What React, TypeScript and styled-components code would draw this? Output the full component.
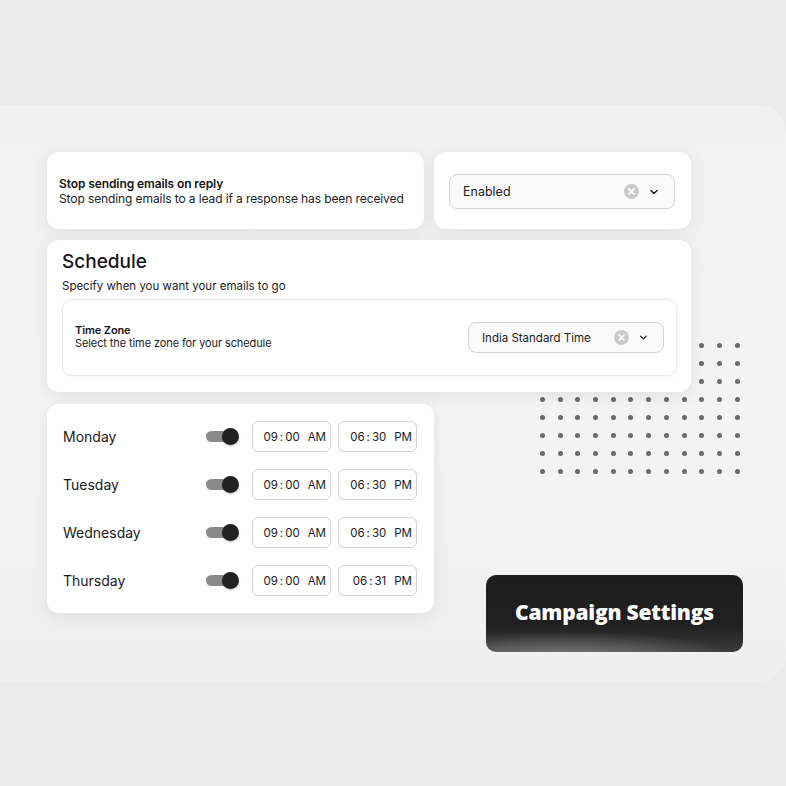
import React from 'react';
import styled, { createGlobalStyle } from 'styled-components';
import { ChevronDown } from 'lucide-react';

const GlobalStyle = createGlobalStyle`
    body {
        margin: 0;
        padding: 0;
        font-family: 'Inter', 'Liberation Sans', sans-serif;
        background-color: #ebebeb;
        color: #161616;
    }
`;

const Page = styled.div`
    width: 786px;
    height: 786px;
    padding-top: 105px;
    box-sizing: border-box;
    overflow: hidden;
`;

const Panel = styled.div`
    position: relative;
    height: 577px;
    box-sizing: border-box;
    padding: 47px 0 0 47px;
    background: linear-gradient(180deg, #f1f1f1 0%, #f4f4f4 60%, #efefef 100%);
    border-radius: 0 28px 28px 0;
    display: flex;
    flex-direction: column;
`;

const Dots = styled.div`
    position: absolute;
    left: 540px;
    top: 238px;
    display: grid;
    grid-template-columns: repeat(12, 5px);
    grid-auto-rows: 5px;
    column-gap: 12.7px;
    row-gap: 13px;
`;

const Dot = styled.span`
    width: 5px;
    height: 5px;
    border-radius: 50%;
    background: #6a6a6a;
`;

const Card = styled.div<{ $w: number }>`
    position: relative;
    z-index: 1;
    width: ${p => p.$w}px;
    box-sizing: border-box;
    background: #fff;
    border-radius: 12px;
    box-shadow: 0 4px 18px rgba(0, 0, 0, 0.08);
`;

const TopRow = styled.div`
    display: flex;
    gap: 10px;
`;

const ReplyCard = styled(Card)`
    height: 77px;
    padding: 2px 12px 0;
    display: flex;
    flex-direction: column;
    justify-content: center;
    white-space: nowrap;
`;

const SelectCard = styled(Card)`
    height: 77px;
    padding: 2px 16px 0 15px;
    display: flex;
    align-items: center;
`;

const Label = styled.div<{ $size: number }>`
    font-size: ${p => p.$size}px;
    font-weight: 600;
    line-height: 1.2;
    letter-spacing: -0.1px;
`;

const Hint = styled.div<{ $size: number }>`
    font-size: ${p => p.$size}px;
    line-height: 1.25;
    color: #222;
    letter-spacing: -0.1px;
`;

const Select = styled.div<{ $h: number; $size: number }>`
    flex: 1;
    height: ${p => p.$h}px;
    box-sizing: border-box;
    border: 1.5px solid #d3d3d3;
    border-radius: 8px;
    background: #fafafa;
    display: flex;
    align-items: center;
    padding: 0 14px 0 13px;
    font-size: ${p => p.$size}px;
    color: #222;
`;

const SelectValue = styled.span`
    flex: 1;
`;

const Clear = styled.svg`
    width: 15px;
    height: 15px;
    margin-right: 9px;
`;

const ScheduleCard = styled(Card)`
    margin-top: 11px;
    height: 152px;
    padding: 10px 14px 15px 15px;
`;

const Heading = styled.div`
    font-size: 19px;
    font-weight: 500;
    line-height: 24px;
`;

const SubHeading = styled.div`
    font-size: 11.5px;
    color: #222;
    margin-top: 5px;
`;

const ZoneBox = styled.div`
    margin-top: 6px;
    height: 77px;
    box-sizing: border-box;
    border: 1px solid #e9e9e9;
    border-radius: 10px;
    box-shadow: 0 2px 6px rgba(0, 0, 0, 0.04);
    display: flex;
    align-items: center;
    padding: 0 12px 0 12px;
`;

const ZoneText = styled.div`
    flex: 1;
`;

const ZoneSelect = styled(Select)`
    flex: 0 0 196px;
`;

const BottomRow = styled.div`
    display: flex;
    align-items: flex-start;
    margin-top: 12px;
`;

const DaysCard = styled(Card)`
    height: 209px;
    padding: 17px 17px 0 16px;
    display: flex;
    flex-direction: column;
    gap: 17px;
`;

const DayRow = styled.div`
    display: flex;
    align-items: center;
    height: 31px;
`;

const DayName = styled.div`
    flex: 1;
    font-size: 14px;
    color: #1a1a1a;
`;

const Toggle = styled.div`
    position: relative;
    width: 33px;
    height: 17px;
    margin-right: 13px;
`;

const Track = styled.span`
    position: absolute;
    left: 0;
    top: 3px;
    width: 26px;
    height: 11px;
    border-radius: 6px;
    background: #8a8a8a;
`;

const Knob = styled.span`
    position: absolute;
    right: 0;
    top: 0;
    width: 17px;
    height: 17px;
    border-radius: 50%;
    background: #222;
    box-shadow: 0 1px 2px rgba(0, 0, 0, 0.3);
`;

const TimeBox = styled.div`
    width: 79px;
    height: 31px;
    box-sizing: border-box;
    border: 1.5px solid #d4d4d4;
    border-radius: 6px;
    display: flex;
    align-items: center;
    justify-content: flex-end;
    padding-right: 4px;
    font-size: 11.5px;
    color: #1a1a1a;
    & + & {
        margin-left: 7px;
    }
`;

const Colon = styled.span`
    margin: 0 2px;
`;

const Meridiem = styled.span`
    margin-left: 8px;
`;

const Badge = styled.div`
    position: relative;
    z-index: 1;
    margin: 171px 0 0 52px;
    width: 257px;
    height: 77px;
    border-radius: 10px;
    background:
        radial-gradient(ellipse 70% 35% at 30% 108%, rgba(150, 150, 150, 0.75), rgba(150, 150, 150, 0) 100%),
        linear-gradient(180deg, #1d1d1d 0%, #202020 65%, #3a3a3a 100%);
    display: flex;
    align-items: center;
    justify-content: center;
    padding-bottom: 4px;
    box-sizing: border-box;
    color: #fff;
    font-family: 'Open Sans', 'DejaVu Sans', sans-serif;
    font-weight: 800;
    font-size: 21px;
    letter-spacing: -0.2px;
`;

const ClearIcon = () => (
    <Clear viewBox="0 0 16 16">
        <circle cx="8" cy="8" r="8" fill="#c9c9c9" />
        <path d="M5.3 5.3 L10.7 10.7 M10.7 5.3 L5.3 10.7" stroke="#fff" strokeWidth="1.8" strokeLinecap="round" />
    </Clear>
);

const Time = ({ h, m, p }: { h: string; m: string; p: string }) => (
    <TimeBox>
        {h}<Colon>:</Colon>{m}<Meridiem>{p}</Meridiem>
    </TimeBox>
);

const days = [
    { name: 'Monday', end: '30' },
    { name: 'Tuesday', end: '30' },
    { name: 'Wednesday', end: '30' },
    { name: 'Thursday', end: '31' },
];

const App: React.FC = () => {
    return (
        <>
            <GlobalStyle />
            <Page>
                <Panel>
                    <Dots>
                        {Array.from({ length: 96 }).map((_, i) => <Dot key={i} />)}
                    </Dots>

                    <TopRow>
                        <ReplyCard $w={377}>
                            <Label $size={12}>Stop sending emails on reply</Label>
                            <Hint $size={12}>Stop sending emails to a lead if a response has been received</Hint>
                        </ReplyCard>
                        <SelectCard $w={257}>
                            <Select $h={35} $size={12.5}>
                                <SelectValue>Enabled</SelectValue>
                                <ClearIcon />
                                <ChevronDown size={12} strokeWidth={3} color="#222" />
                            </Select>
                        </SelectCard>
                    </TopRow>

                    <ScheduleCard $w={644}>
                        <Heading>Schedule</Heading>
                        <SubHeading>Specify when you want your emails to go</SubHeading>
                        <ZoneBox>
                            <ZoneText>
                                <Label $size={11}>Time Zone</Label>
                                <Hint $size={11}>Select the time zone for your schedule</Hint>
                            </ZoneText>
                            <ZoneSelect $h={31} $size={11.5}>
                                <SelectValue>India Standard Time</SelectValue>
                                <ClearIcon />
                                <ChevronDown size={11} strokeWidth={3} color="#222" />
                            </ZoneSelect>
                        </ZoneBox>
                    </ScheduleCard>

                    <BottomRow>
                        <DaysCard $w={387}>
                            {days.map(d => (
                                <DayRow key={d.name}>
                                    <DayName>{d.name}</DayName>
                                    <Toggle>
                                        <Track />
                                        <Knob />
                                    </Toggle>
                                    <Time h="09" m="00" p="AM" />
                                    <Time h="06" m={d.end} p="PM" />
                                </DayRow>
                            ))}
                        </DaysCard>
                        <Badge>Campaign Settings</Badge>
                    </BottomRow>
                </Panel>
            </Page>
        </>
    );
};

export default App;
